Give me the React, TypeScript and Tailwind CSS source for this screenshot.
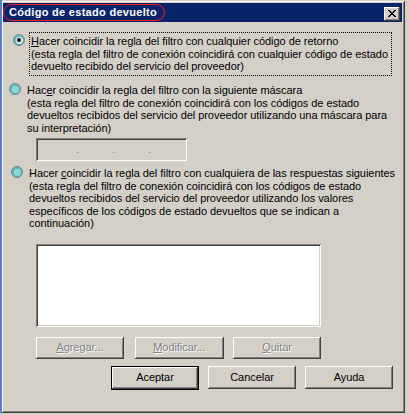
import React from "react";

const RAISED =
  "shadow-[inset_-1px_-1px_0_#404040,inset_1px_1px_0_#ffffff,inset_-2px_-2px_0_#808080]";
const SUNKEN =
  "shadow-[inset_1px_1px_0_#808080,inset_-1px_-1px_0_#ffffff,inset_2px_2px_0_#404040,inset_-2px_-2px_0_#d4d0c8]";

function Radio({ checked }: { checked?: boolean }) {
  return (
    <svg width="12" height="12" viewBox="0 0 12 12" className="shrink-0">
      <circle cx="6" cy="6" r="5.5" fill="#5fb6b6" stroke="#7b8b8b" strokeWidth="1" />
      <circle cx="6.3" cy="6.3" r="3.6" fill={checked ? "#d6f2f2" : "#8fd6d6"} />
      {checked && <circle cx="6" cy="6" r="2" fill="#000000" />}
    </svg>
  );
}

function Btn({
  u,
  rest,
  disabled,
  def,
  w,
  h,
}: {
  u: string;
  rest: string;
  disabled?: boolean;
  def?: boolean;
  w: string;
  h: string;
}) {
  const inner = (
    <div
      className={`flex items-center justify-center w-full h-full bg-[#d4d0c8] ${RAISED} ${
        disabled ? "text-[#808080] [text-shadow:1px_1px_0_#ffffff]" : "text-black"
      }`}
    >
      <span>
        <span className={disabled ? "underline" : ""}>{u}</span>
        {rest}
      </span>
    </div>
  );
  return (
    <div className={`${w} ${h} shrink-0 ${def ? "border border-black" : ""}`}>{inner}</div>
  );
}

export default function App() {
  return (
    <div className="w-[409px] h-[415px] bg-[#d4d0c8] font-['Liberation_Sans',Arial,sans-serif] text-[11px] leading-[12.5px] tracking-[-0.05px] whitespace-nowrap text-black overflow-hidden">
      <div className="relative w-[405px] h-[413px] p-[3px] bg-[#d4d0c8] shadow-[inset_2px_0_0_#5b7fc6,inset_0_1px_0_#d4d0c8,inset_-1px_-1px_0_#404040,inset_0_2px_0_#ffffff,inset_3px_0_0_#ffffff,inset_-2px_-2px_0_#808080]">
        {/* Title bar */}
        <div className="relative flex items-start h-[19px] bg-[#0a246a]">
          <div className="pl-[6px] pt-[3px] font-bold text-white tracking-[0.3px] text-[11px] leading-[13px]">
            Código de estado devuelto
          </div>
          <div className="flex-1" />
          <div
            className={`mt-[4px] mr-[2px] w-[16px] h-[14px] bg-[#d4d0c8] ${RAISED} flex items-center justify-center`}
          >
            <svg width="8" height="7" viewBox="0 0 8 7" shapeRendering="crispEdges" className="-mt-[1px] -ml-[1px]">
              <path
                d="M0 0h2v1H0zM6 0h2v1H6zM1 1h2v1H1zM5 1h2v1H5zM2 2h4v1H2zM3 3h2v1H3zM2 4h4v1H2zM1 5h2v1H1zM5 5h2v1H5zM0 6h2v1H0zM6 6h2v1H6z"
                fill="#000"
              />
            </svg>
          </div>
          <div className="absolute left-0 top-[1px] w-[162px] h-[17px] rounded-full border border-[#ff1a1a]" />
        </div>

        {/* Option 1 */}
        <div className="flex items-start mt-[10px] ml-[10px]">
          <div className="mt-[2px]">
            <Radio checked />
          </div>
          <div className="ml-[4px] w-[363px] h-[44px] border border-dotted border-black pt-[2px] pl-[1px]">
            <div>
              <span className="underline">H</span>acer coincidir la regla del filtro con cualquier código de retorno
            </div>
            <div>(esta regla del filtro de conexión coincidirá con cualquier código de estado</div>
            <div>devuelto recibido del servicio del proveedor)</div>
          </div>
        </div>

        {/* Option 2 */}
        <div className="flex items-start mt-[8px] ml-[6px]">
          <div className="-mt-[1px]">
            <Radio />
          </div>
          <div className="ml-[6px]">
            <div>
              Hac<span className="underline">e</span>r coincidir la regla del filtro con la siguiente máscara
            </div>
            <div>(esta regla del filtro de conexión coincidirá con los códigos de estado</div>
            <div>devueltos recibidos del servicio del proveedor utilizando una máscara para</div>
            <div>su interpretación)</div>
            <div
              className={`mt-[4px] ml-[9px] w-[151px] h-[23px] bg-[#d4d0c8] ${SUNKEN} flex items-center text-[#808080]`}
            >
              <span className="ml-[40px]">.</span>
              <span className="ml-[33px]">.</span>
              <span className="ml-[33px]">.</span>
            </div>
          </div>
        </div>

        {/* Option 3 */}
        <div className="flex items-start mt-[6px] ml-[8px]">
          <div className="-mt-[1px]">
            <Radio />
          </div>
          <div className="ml-[6px]">
            <div>
              Hacer <span className="underline">c</span>oincidir la regla del filtro con cualquiera de las respuestas siguientes
            </div>
            <div>(esta regla del filtro de conexión coincidirá con los códigos de estado</div>
            <div>devueltos recibidos del servicio del proveedor utilizando los valores</div>
            <div>específicos de los códigos de estado devueltos que se indican a</div>
            <div>continuación)</div>
          </div>
        </div>

        {/* List box */}
        <div className={`mt-[14px] ml-[33px] w-[285px] h-[83px] bg-white ${SUNKEN}`} />

        {/* Row 1 buttons */}
        <div className="flex mt-[10px] ml-[33px]">
          <Btn u="A" rest="gregar..." disabled w="w-[88px]" h="h-[22px]" />
          <div className="w-[11px]" />
          <Btn u="M" rest="odificar..." disabled w="w-[89px]" h="h-[22px]" />
          <div className="w-[9px]" />
          <Btn u="Q" rest="uitar" disabled w="w-[88px]" h="h-[22px]" />
        </div>

        {/* Row 2 buttons */}
        <div className="flex mt-[7px] ml-[108px]">
          <Btn u="A" rest="ceptar" def w="w-[88px]" h="h-[24px]" />
          <div className="w-[9px]" />
          <Btn u="C" rest="ancelar" w="w-[88px]" h="h-[23px]" />
          <div className="w-[9px]" />
          <Btn u="A" rest="yuda" w="w-[88px]" h="h-[23px]" />
        </div>
      </div>
    </div>
  );
}
